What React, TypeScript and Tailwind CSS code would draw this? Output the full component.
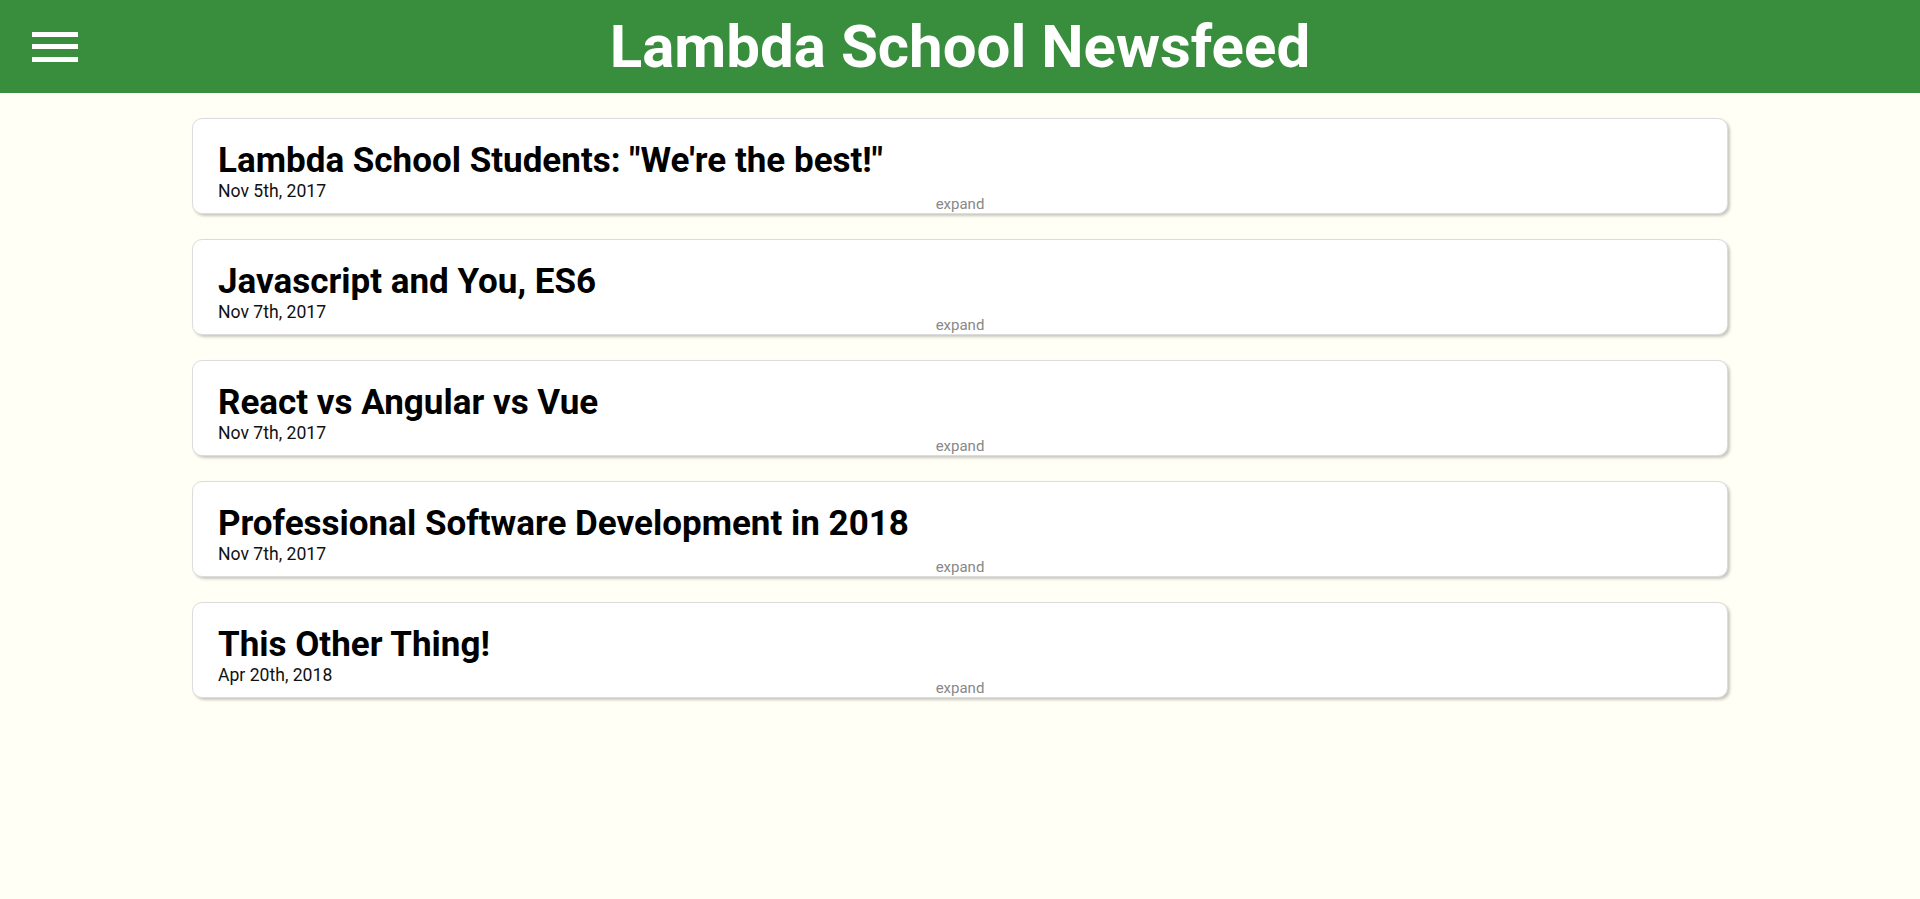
import React from 'react';

interface Article {
  title: string;
  date: string;
}

const ARTICLES: Article[] = [
  { title: 'Lambda School Students: "We\'re the best!"', date: 'Nov 5th, 2017' },
  { title: 'Javascript and You, ES6', date: 'Nov 7th, 2017' },
  { title: 'React vs Angular vs Vue', date: 'Nov 7th, 2017' },
  { title: 'Professional Software Development in 2018', date: 'Nov 7th, 2017' },
  { title: 'This Other Thing!', date: 'Apr 20th, 2018' },
];

const ArticleCard: React.FC<{ article: Article }> = ({ article }) => (
  <div className="bg-white border border-[#dcdcdc] rounded-[10px] shadow-[2px_2px_3px_rgba(0,0,0,0.22)] pt-[21px] px-[25px] h-[96px] overflow-hidden">
    <h2 className="text-[35px] leading-[41px] font-bold text-black">{article.title}</h2>
    <p className="text-[17.6px] leading-[20px] text-[#111]">{article.date}</p>
    <div className="text-center text-[15px] leading-[17px] -mt-[5px] text-[#888]">expand</div>
  </div>
);

export default function App() {
  return (
    <div className="min-h-screen bg-[#fffff5]" style={{ fontFamily: 'Roboto, sans-serif' }}>
      {/* Header */}
      <header className="bg-[#388e3c] h-[93px] grid grid-cols-[1fr_auto_1fr] items-center">
        <div className="pl-[32px]">
          <button className="flex flex-col gap-[7.5px] w-[46px]">
            <span className="block h-[5px] bg-white" />
            <span className="block h-[5px] bg-white" />
            <span className="block h-[5px] bg-white" />
          </button>
        </div>
        <h1 className="text-white font-bold text-[60px] leading-[70px]">Lambda School Newsfeed</h1>
        <div />
      </header>

      {/* Articles */}
      <main className="w-[80%] mx-auto pt-[25px] flex flex-col gap-[25px]">
        {ARTICLES.map((a) => (
          <ArticleCard key={a.title} article={a} />
        ))}
      </main>
    </div>
  );
}
